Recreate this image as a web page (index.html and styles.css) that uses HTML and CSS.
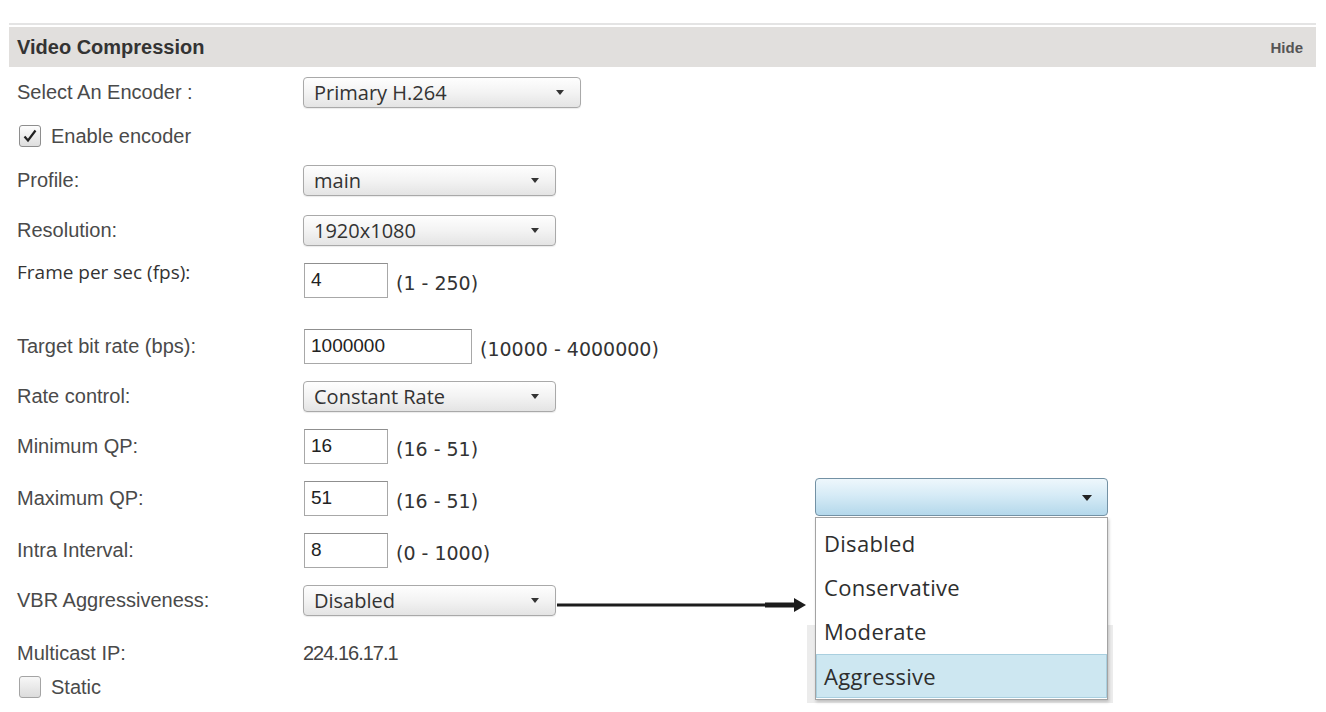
FILE: index.html
```html
<!DOCTYPE html>
<html lang="en">
   <head>
      <meta charset="UTF-8">
      <meta name="viewport" content="width=device-width, initial-scale=1.0">
      <title>Video Compression</title>
      <link rel="stylesheet" href="styles.css">
   </head>
   <body>
      <div class="page">
         <div class="panel-rule"></div>
         <div class="panel-head">
            <span class="panel-title">Video Compression</span>
            <a class="panel-hide" href="#">Hide</a>
         </div>

         <div class="form">
            <div class="row row-first">
               <span class="label">Select An Encoder :</span>
               <span class="select-wrap select-wide">
                  <select><option>Primary H.264</option></select>
               </span>
            </div>
            <div class="row row-tight">
               <label class="check">
                  <input type="checkbox" checked>
                  <span class="box">
                     <svg width="16" height="16" viewBox="0 0 16 16"><path d="M2.5 8.5 L6 12.5 L13.5 2.5" fill="none" stroke="#222" stroke-width="2.2"/></svg>
                  </span>
                  Enable encoder
               </label>
            </div>
            <div class="row row-tight">
               <span class="label">Profile:</span>
               <span class="select-wrap">
                  <select><option>main</option></select>
               </span>
            </div>
            <div class="row">
               <span class="label">Resolution:</span>
               <span class="select-wrap">
                  <select><option>1920x1080</option></select>
               </span>
            </div>
            <div class="row">
               <span class="label label-alt">Frame per sec (fps):</span>
               <input class="field" type="text" value="4">
               <span class="range">(1 - 250)</span>
            </div>
            <div class="row row-spaced">
               <span class="label">Target bit rate (bps):</span>
               <input class="field field-wide" type="text" value="1000000">
               <span class="range">(10000 - 4000000)</span>
            </div>
            <div class="row">
               <span class="label">Rate control:</span>
               <span class="select-wrap">
                  <select><option>Constant Rate</option></select>
               </span>
            </div>
            <div class="row">
               <span class="label">Minimum QP:</span>
               <input class="field" type="text" value="16">
               <span class="range">(16 - 51)</span>
            </div>
            <div class="row row-loose">
               <span class="label">Maximum QP:</span>
               <input class="field" type="text" value="51">
               <span class="range">(16 - 51)</span>
            </div>
            <div class="row row-loose">
               <span class="label">Intra Interval:</span>
               <input class="field" type="text" value="8">
               <span class="range">(0 - 1000)</span>
            </div>
            <div class="row">
               <span class="label">VBR Aggressiveness:</span>
               <span class="select-wrap">
                  <select><option>Disabled</option></select>
               </span>
            </div>
            <div class="row row-text">
               <span class="label">Multicast IP:</span>
               <span class="value">224.16.17.1</span>
            </div>
            <div class="row row-end">
               <label class="check">
                  <input type="checkbox">
                  <span class="box box-off"></span>
                  Static
               </label>
            </div>
         </div>

         <!-- pointer from the VBR select to its opened list -->
         <svg class="pointer" width="250" height="20" viewBox="0 0 250 20">
            <rect x="0" y="8.5" width="210" height="3" fill="#1c1c1c"/>
            <rect x="208" y="7.5" width="30" height="5" fill="#1c1c1c"/>
            <path d="M237 3 L249 10 L237 17 Z" fill="#1c1c1c"/>
         </svg>

         <div class="backdrop"></div>
         <div class="dropdown">
            <div class="dropdown-button"><i class="caret"></i></div>
            <ul class="dropdown-list">
               <li>Disabled</li>
               <li>Conservative</li>
               <li>Moderate</li>
               <li class="active">Aggressive</li>
            </ul>
         </div>
      </div>
   </body>
</html>
```

FILE: styles.css
```css
body {
margin: 0;
background-color: #fff;
font-family: "Liberation Sans", Arial, sans-serif;
color: #4a4a4a;
}
.page {
position: relative;
height: 712px;
padding: 23px 10px 0 9px;
box-sizing: border-box;
overflow: hidden;
}
.panel-rule {
height: 2px;
background-color: #e4e4e4;
margin-bottom: 2px;
}
.panel-head {
height: 40px;
display: flex;
align-items: center;
justify-content: space-between;
padding: 0 13px 0 8px;
background-color: #e1dfdd;
}
.panel-title {
font-size: 20px;
font-weight: bold;
color: #333;
}
.panel-hide {
font-size: 15px;
font-weight: bold;
color: #555;
text-decoration: none;
}

/* form rows */
.row {
display: flex;
align-items: center;
height: 36px;
margin-top: 14px;
}
.row-first { margin-top: 7px; }
.row-tight { margin-top: 8px; }
.row-spaced { margin-top: 30px; }
.row-loose { margin-top: 16px; }
.row-text { height: 30px; margin-top: 20px; }
.row-end { height: 30px; margin-top: 4px; }
.label {
flex-shrink: 0;
width: 286px;
padding-left: 8px;
font-size: 20px;
}
.label-alt {
align-self: flex-start;
margin-top: -3px;
font-family: "Open Sans", sans-serif;
font-size: 19px;
color: #333;
}
.value {
font-size: 20px;
letter-spacing: -1px;
color: #444;
}

/* selects */
.select-wrap {
position: relative;
width: 253px;
height: 31px;
}
.select-wide { width: 278px; }
.select-wrap::after {
content: "";
position: absolute;
right: 17px;
top: 13px;
border-left: 4px solid transparent;
border-right: 4px solid transparent;
border-top: 5px solid #333;
pointer-events: none;
}
.select-wrap select {
width: 100%;
height: 100%;
-webkit-appearance: none;
appearance: none;
border: 1px solid #a9a9a9;
border-radius: 4px;
background: linear-gradient(#fefefe, #f3f3f3 50%, #e4e4e4);
box-shadow: 0 1px 1px rgba(0, 0, 0, 0.08);
padding: 0 30px 0 10px;
font-family: "Open Sans", sans-serif;
font-size: 20px;
color: #333;
}

/* text inputs */
.field {
width: 84px;
height: 35px;
box-sizing: border-box;
margin: 0 0 0 1px;
padding: 0 6px;
border: 1px solid #a8a8a8;
border-top-color: #8f8f8f;
font-family: "Liberation Sans", Arial, sans-serif;
font-size: 19px;
color: #222;
}
.field-wide { width: 168px; }
.range {
margin: 6px 0 0 8px;
font-family: "DejaVu Sans", Verdana, sans-serif;
font-size: 19px;
color: #333;
}

/* checkboxes */
.check {
display: flex;
align-items: center;
padding-left: 10px;
font-size: 20px;
}
.check input {
display: none;
}
.box {
display: flex;
align-items: center;
justify-content: center;
width: 22px;
height: 22px;
box-sizing: border-box;
margin-right: 10px;
border: 1px solid #8e8e8e;
border-radius: 3px;
background: linear-gradient(#fdfdfd, #dedede);
}
.box-off {
border-color: #a4a4a4;
background: linear-gradient(#f7f7f7, #dcdcdc);
}

/* opened list */
.pointer {
position: absolute;
left: 557px;
top: 595px;
}
.backdrop {
position: absolute;
left: 807px;
top: 625px;
width: 306px;
height: 78px;
background-color: #ececec;
}
.dropdown {
position: absolute;
left: 815px;
top: 478px;
width: 293px;
}
.dropdown-button {
position: relative;
height: 38px;
box-sizing: border-box;
border: 1px solid #7391a4;
border-radius: 4px;
background: linear-gradient(#eef7fc, #d6ebf6 45%, #b4d8eb);
}
.caret {
position: absolute;
right: 15px;
top: 16px;
border-left: 5px solid transparent;
border-right: 5px solid transparent;
border-top: 6px solid #222;
}
.dropdown-list {
list-style: none;
margin: 1px 0 0 0;
padding: 4px 0 1px 0;
border: 1px solid #a3a3a3;
background-color: #fff;
box-shadow: 1px 2px 3px rgba(0, 0, 0, 0.2);
}
.dropdown-list li {
height: 44px;
line-height: 42px;
padding-left: 8px;
font-family: "Open Sans", sans-serif;
font-size: 22px;
letter-spacing: 0.3px;
color: #2e2e2e;
box-sizing: border-box;
}
.dropdown-list li.active {
background-color: #cde7f1;
border: 1px solid #a9cfdf;
padding-left: 7px;
}
```
